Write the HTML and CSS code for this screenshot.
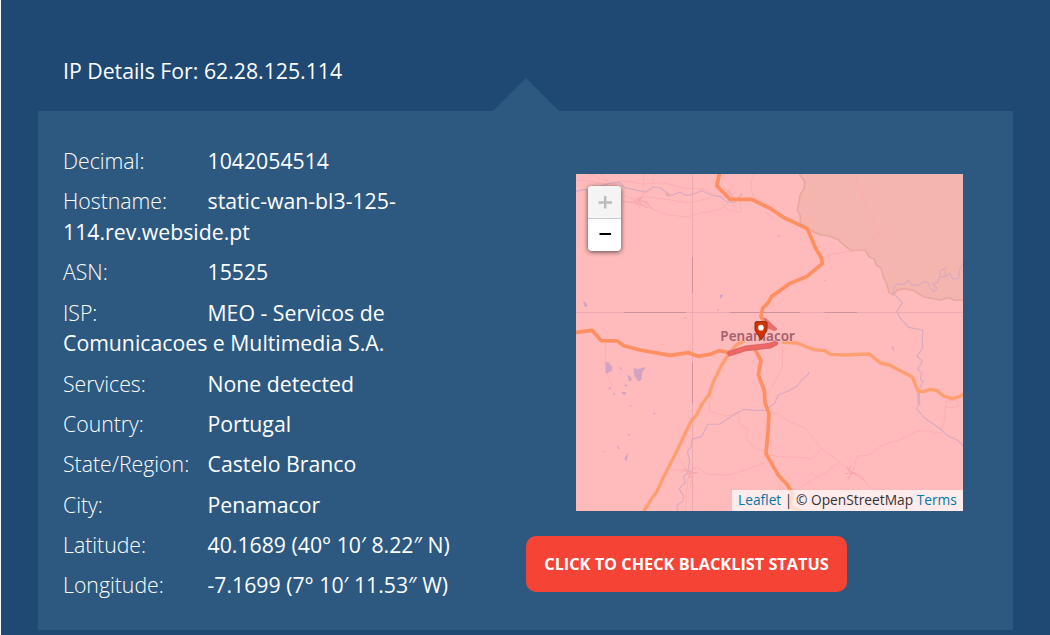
FILE: index.html
```
<!DOCTYPE html>
<html lang="en">
<head>
<meta charset="utf-8">
<title>IP Details</title>
<link rel="stylesheet" href="styles.css">
</head>
<body>
<main class="page">
  <h1 class="title">IP Details For: 62.28.125.114</h1>
  <section class="panel">
    <div class="details">
      <p class="row"><span class="label">Decimal:</span><span>1042054514</span></p>
      <p class="row"><span class="label">Hostname:</span><span>static-wan-bl3-125-114.rev.webside.pt</span></p>
      <p class="row"><span class="label">ASN:</span><span>15525</span></p>
      <p class="row"><span class="label">ISP:</span><span>MEO - Servicos de Comunicacoes e Multimedia S.A.</span></p>
      <p class="row"><span class="label">Services:</span><span>None detected</span></p>
      <p class="row"><span class="label">Country:</span><span>Portugal</span></p>
      <p class="row"><span class="label">State/Region:</span><span>Castelo Branco</span></p>
      <p class="row"><span class="label">City:</span><span>Penamacor</span></p>
      <p class="row"><span class="label">Latitude:</span><span>40.1689 (40° 10′ 8.22″ N)</span></p>
      <p class="row"><span class="label">Longitude:</span><span>-7.1699 (7° 10′ 11.53″ W)</span></p>
    </div>
    <div class="side">
      <div class="map">
        <svg class="tiles" viewBox="18 18 1161 1011">
          <rect x="18" y="18" width="1161" height="1011" class="land"/>
          <!-- Spain -->
          <g transform="translate(585 0)">
            <path class="spain" d="M103 18L119 40L117 62L105 80L102 103L97 126L106 144L105 163L128 180L146 192L167 201L190 203L221 216L243 237L262 248L300 246L313 267L328 273L334 292L348 300L356 328L366 350L372 374L384 380L397 366L420 362L446 368L477 387L525 396L549 389L570 397L594 396V18Z"/>
            <path class="border" d="M103 18L119 40L117 62L105 80L102 103L97 126L106 144L105 163L128 180L146 192L167 201L190 203L221 216L243 237L262 248L300 246L313 267L328 273L334 292L348 300L356 328L366 350L372 374L384 380L397 366L420 362L446 368L477 387L525 396L549 389L570 397L594 396"/>
          </g>
          <!-- minor roads -->
          <g class="minor">
            <path d="M18 36L60 40L112 48L160 38L220 48L280 44L340 60L400 64L440 82L480 92L500 125L482 132L466 118L452 100M90 18L122 46L160 82L190 92L230 86L300 96L360 105L420 90M222 18L219 70L208 120M60 18L112 40M190 96L240 120L290 140L350 147L390 136L450 124L475 105M550 18L542 48L548 82L560 94M254 18L242 68L220 80M510 92L514 130L496 133M462 65L480 68L490 90"/>
            <path class="town" d="M160 100L190 104L205 93L210 103L228 99L240 115L254 126M187 103L215 111L232 120M207 92L234 110M215 87L199 112M465 80L475 67L482 81L495 92M473 90L493 75"/>
            <path d="M863 18L860 46L877 60L878 92L893 120L912 142L909 166L925 183L925 207L906 215L902 233L880 244L830 251L780 259L757 284M585 132L612 154"/>
          </g>
          <g class="minor" transform="translate(0 516)">
            <path d="M106 10L106 64L116 84L112 104L128 140M370 0L353 28M420 164L418 214L446 222L474 228L505 215M505 218L507 250L534 268L528 300L560 326L585 334M320 336L340 376L358 396L350 450L346 510M290 386L350 394L384 382L410 402L474 406L530 388L585 369M354 412L370 410M360 425L374 445M366 410L361 442"/>
            <path class="town" d="M340 387L379 400M370 384L358 412M348 402L382 397"/>
          </g>
          <g class="minor" transform="translate(585 516)">
            <path d="M52 18L53 80L27 130L8 164M10 216L42 222L72 245L120 263L144 294L169 325L213 357L249 389L296 421L324 450M5 344L48 350L105 352L140 357L169 326M110 440L155 412L185 397L219 369M137 400L160 411M270 372L276 349L312 345L352 315L401 300L458 273L494 273L507 282L528 276L539 240L541 198L543 184L575 181L582 196L564 203L541 201M15 332L36 321"/>
            <path class="town" d="M246 380L260 401L249 417M240 401L270 398M258 378L251 393L288 409L298 422M268 380L260 398"/>
          </g>
          <!-- rivers and lakes -->
          <g class="river">
            <path d="M18 70L42 65L65 67L85 57L116 47L148 42L164 59L205 68L225 72L251 57L270 60L303 83L330 72L346 82L366 80L395 68L430 83L450 86L468 101L495 103L516 77"/>
            <path d="M1179 284L1168 307L1166 331L1148 333L1140 316L1127 326L1110 325L1110 309L1127 300L1126 324L1107 329L1103 343L1087 348L1101 360L1092 370L1080 358L1074 344L1060 340L1047 352L1023 350L1015 336L1002 349L982 348L969 361L974 379L997 404L981 430L988 447L1016 478L1058 486L1057 542L1041 564L1058 580L1042 603L1055 614L1051 636L1060 640L1046 666L1046 710L1040 722L1063 750L1113 784L1131 802L1165 818L1179 834"/>
            <path d="M586 727L555 727L521 724L485 745L450 768L413 769L396 805L365 814L363 837L352 850L359 879L353 915L341 926L346 944L327 962L341 984L338 1000L321 1012L322 1029M596 720L615 704L624 682L656 668L682 654L694 637L716 618L715 612"/>
            <path d="M1045 672L1047 706" stroke-width="8"/>
          </g>
          <g class="lake">
            <path d="M39 400L48 404L54 414L44 417ZM449 382L459 378L456 390L450 391ZM440 425L447 423L445 430ZM342 449L348 447L348 453ZM622 201L630 202L627 207ZM761 337L765 334L766 340Z"/>
            <path d="M106 582L115 583L128 598L125 609L107 617ZM190 600L203 603L229 597L217 612L214 637L205 640L193 624ZM172 621L181 624L186 635L178 642ZM146 595L155 601L153 607ZM162 652L172 649L169 657ZM154 672L168 672L168 680L157 679ZM114 661L124 657L120 665ZM128 673L138 679L130 680ZM179 710L186 713L180 716ZM249 733L256 735L254 742ZM172 798L181 798L175 805ZM141 827L150 844L144 842ZM163 873L169 862L171 855L174 860L169 880ZM97 848L105 850L100 853ZM357 750L368 749L369 756ZM964 533L972 539L972 551Z"/>
            <path d="M286 75L298 78L297 87L289 85Z" class="park"/>
          </g>
          <!-- tile seams -->
          <path class="seam" d="M367.500 18V1029M18 433.500H1179"/>
          <path class="seam dark" d="M367.500 268V374M367.500 585V705M163 433.500H347M480 433.500H690M765 433.500H860"/>
          <!-- main roads -->
          <g class="road light">
            <path d="M222 1029L246 990L260 972L280 928L320 850L360 766L380 740L396 708L416 682L430 642L450 600L478 555L498 532L520 520"/>
            <path d="M640 523L680 525L732 545L764 548L781 559L821 561L898 558L931 585L958 591L1027 627L1044 669L1060 671L1080 664L1102 668L1120 684L1146 692L1169 686L1179 679"/>
          </g>
          <g class="road">
            <path d="M448 18L440 53L480 94L545 94L602 122L640 148L712 182L735 237L754 270L757 287L711 325L658 347L604 386L595 404L578 420L573 445L585 466"/>
            <path d="M18 493L66 487L94 518L142 519L162 533L210 546L301 562L355 554L384 565L420 559L448 548L478 554"/>
            <path d="M557 548L573 578L565 620L583 668L585 704L597 737L594 790L588 857L625 922L650 948L668 976L660 1015L690 1029"/>
          </g>
          <path class="trunk" d="M480 556L527 541L600 533L616 525"/>
          <path class="trunk-core" d="M480 556L527 541L600 533L616 525"/>
          <path class="urban" d="M580 448L590 452L623 484L614 489L588 480Z"/>
          <text class="place" x="451" y="519" textLength="224" lengthAdjust="spacingAndGlyphs">Penamacor</text>
          <!-- marker -->
          <path class="pin" d="M560 461H587Q591 461 591 465V485Q591 490 583 499L574 516L563 499Q555 490 555 485V465Q555 461 560 461Z"/>
          <circle cx="573" cy="479" r="8.500" fill="#fff"/>
        </svg>
        <div class="zoom">
          <span class="zoom-button disabled"><svg viewBox="0 0 33 32"><path d="M10.500 16.500H24M17.200 10V22.500"/></svg></span>
          <span class="zoom-button"><svg viewBox="0 0 33 32"><path d="M11.500 15H23"/></svg></span>
        </div>
        <div class="attribution"><a>Leaflet</a> | © OpenStreetMap <a>Terms</a></div>
      </div>
      <div class="button">CLICK TO CHECK BLACKLIST STATUS</div>
    </div>
  </section>
</main>
</body>
</html>
```
FILE: styles.css
```
* { box-sizing: border-box; }
body { margin: 0; background: #1f4972; color: #fff; font-family: "Open Sans", sans-serif; overflow: hidden; }
.page { height: 635px; border-left: 1px solid #f4f6f8; padding: 55px 37px 0; }
.title { margin: 0 0 25px 25px; font-size: 21.26px; font-weight: 400; line-height: 31px; }
.panel { position: relative; display: flex; width: 975px; height: 519px; background: #2d5980; padding: 35px 0 0 25px; }
.panel::before { content: ""; position: absolute; left: 455px; top: -33px; width: 66px; height: 33px; background: #2d5980; clip-path: polygon(50% 0, 100% 100%, 0 100%); }
.details { width: 400px; margin-right: 63px; }
.row { margin: 0 0 9.45px; font-size: 21.26px; line-height: 30.83px; }
.label { display: inline-block; width: 144.5px; font-weight: 300; }
.side { padding-top: 28px; }
.map { position: relative; width: 387px; height: 337px; margin-left: 50px; overflow: hidden; }
.tiles { display: block; width: 387px; height: 337px; fill: none; stroke-linejoin: round; stroke-linecap: round; }
.land { fill: #ffbbbb; }
.spain { fill: #f4b5ae; }
.border { stroke: #e4a69c; stroke-width: 5; stroke-dasharray: 3 5; }
.minor { stroke: #fbabad; stroke-width: 2.5; }
.town { stroke: #f8a4a9; stroke-width: 3; }
.river { stroke: #dba9c0; stroke-width: 3.5; }
.lake { fill: #d3a3c3; }
.park { fill: #e3b09b; }
.seam { stroke: #e7a7b0; stroke-width: 2.5; }
.dark { stroke: #c78d9b; }
.road { stroke: #ff8f60; stroke-width: 11; }
.light { stroke: #ff9e70; stroke-width: 10; }
.trunk { stroke: #df6666; stroke-width: 17; }
.trunk-core { stroke: #ee6865; stroke-width: 9; }
.urban { fill: #e96d6c; }
.place { fill: #a3606f; stroke: #ffbaba; stroke-width: 4; paint-order: stroke; font: 600 42px "Noto Sans", sans-serif; }
.pin { fill: #d63200; stroke: #8d2b10; stroke-width: 3; }
.zoom { position: absolute; left: 12px; top: 12px; width: 33px; height: 65px; border-radius: 4px; overflow: hidden; background: #fff; box-shadow: 0 1px 5px rgba(0,0,0,.65); }
.zoom-button { display: block; height: 33px; }
.zoom-button svg { display: block; width: 33px; height: 32px; stroke: #000; stroke-width: 2; }
.disabled { background: #f4f4f4; border-bottom: 1px solid #ccc; }
.disabled svg { stroke: #bbb; stroke-width: 2.5; }
.attribution { position: absolute; right: 0; bottom: 0; width: 231px; height: 21px; padding-left: 6px; background: rgba(255,255,255,.7); color: #333; font-size: 13.75px; line-height: 20px; white-space: nowrap; }
.attribution a { color: #0078a8; }
.button { width: 321px; height: 56px; margin-top: 25px; border-radius: 10px; background: #f54336; text-align: center; font-size: 16.3px; font-weight: 700; line-height: 56px; white-space: nowrap; }
```
